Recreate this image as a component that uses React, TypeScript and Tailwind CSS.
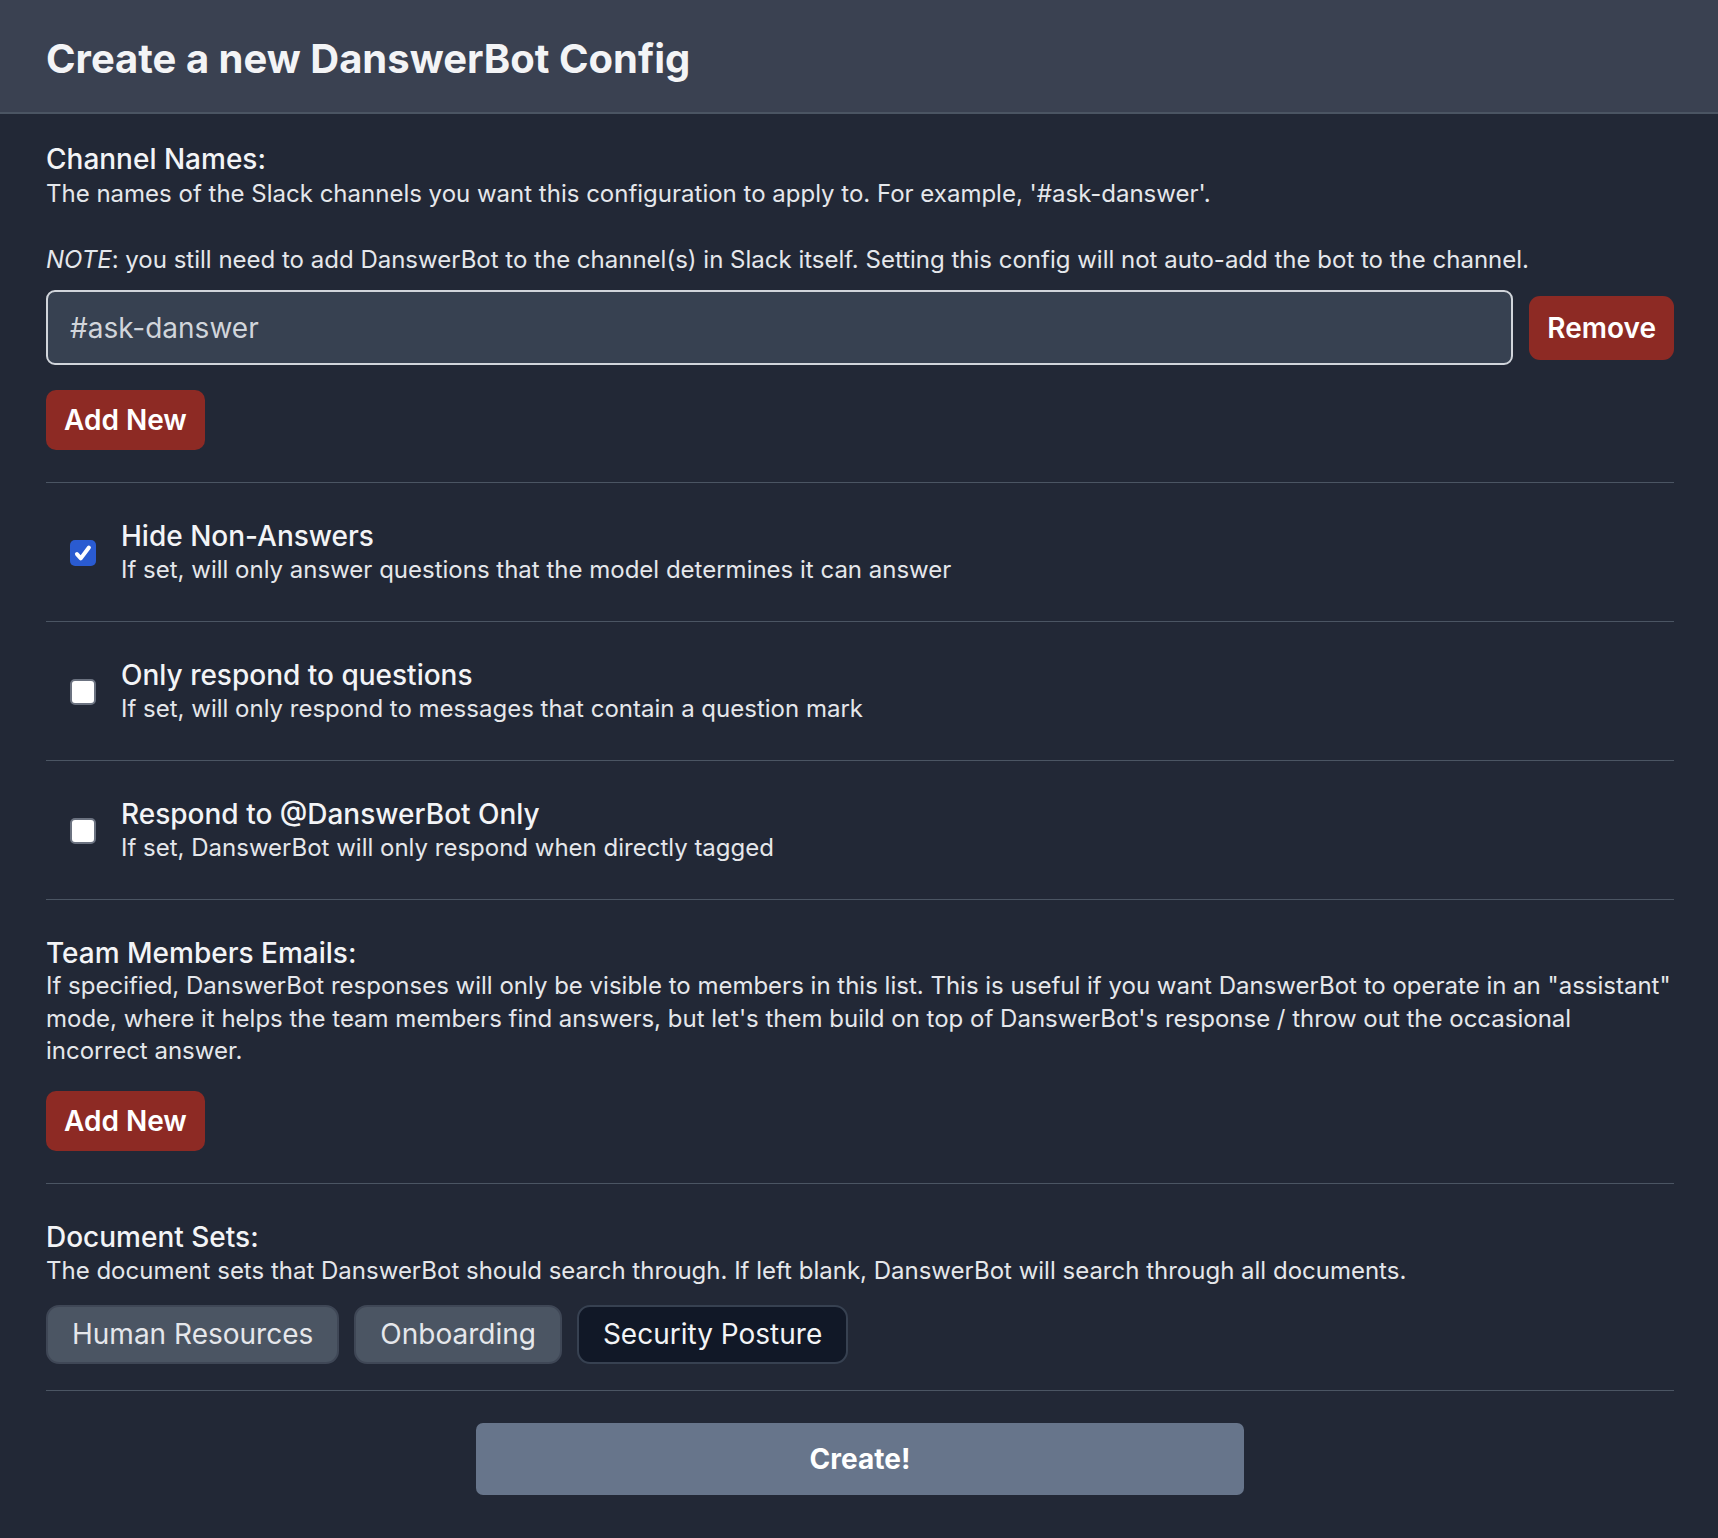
import React from "react";

function Check({ checked }: { checked: boolean }) {
  if (checked) {
    return (
      <div className="w-[26px] h-[26px] rounded-[5px] bg-[#2a5bd1] flex items-center justify-center shrink-0">
        <svg width="22" height="22" viewBox="0 0 16 16" fill="none">
          <path d="M3.6 8.8 L6.4 11.9 L12.3 4.0" stroke="white" strokeWidth="2.9" strokeLinecap="round" strokeLinejoin="round" />
        </svg>
      </div>
    );
  }
  return <div className="w-[26px] h-[26px] rounded-[5px] bg-white border-2 border-[#6b7280] shrink-0" />;
}

function Row({ checked, title, desc }: { checked: boolean; title: string; desc: string }) {
  return (
    <div className="border-t border-[#4b5563] pt-[36px] pb-[35px] pl-[24px] flex items-center gap-[25px]">
      <Check checked={checked} />
      <div>
        <div className="text-[28px] leading-[34px] font-medium text-[#f3f4f6]">{title}</div>
        <div className="text-[24px] leading-[33px] text-[#e5e7eb]">{desc}</div>
      </div>
    </div>
  );
}

function RedButton({ children }: { children: React.ReactNode }) {
  return (
    <button className="bg-[#8d2a24] text-white text-[28px] font-semibold rounded-[10px] px-[18px] h-[60px] leading-[60px]">
      {children}
    </button>
  );
}

export default function App() {
  return (
    <div
      className="min-h-[1538px] bg-[#222836] text-[#e5e7eb]"
      style={{ fontFamily: "Inter, 'Noto Sans', sans-serif" }}
    >
      <div className="h-[114px] bg-[#3a4151] border-b-2 border-[#4b5563] flex items-center px-[46px]">
        <h1 className="text-[40px] font-bold text-[#f3f4f6] mt-[6px]">Create a new DanswerBot Config</h1>
      </div>

      <div className="pl-[46px] pr-[44px] pt-[28px]">
        <div className="text-[28px] leading-[34px] font-medium text-[#f3f4f6]">Channel Names:</div>
        <div className="text-[24px] leading-[33px] mt-[1px]">
          The names of the Slack channels you want this configuration to apply to. For example, '#ask-danswer'.
          <br />
          <br />
          <i>NOTE</i>: you still need to add DanswerBot to the channel(s) in Slack itself. Setting this config will not auto-add the bot to the channel.
        </div>

        <div className="mt-[14px] flex items-center gap-[16px]">
          <div className="flex-1 h-[75px] rounded-[9px] border-2 border-[#d1d5db] bg-[#374151] flex items-center px-[22px] text-[28px] text-[#d1d5db]">
            #ask-danswer
          </div>
          <button className="bg-[#8d2a24] text-white text-[28px] font-semibold rounded-[11px] px-[18px] h-[64px]">Remove</button>
        </div>

        <div className="mt-[25px]">
          <RedButton>Add New</RedButton>
        </div>

        <div className="mt-[32px]">
          <Row checked={true} title="Hide Non-Answers" desc="If set, will only answer questions that the model determines it can answer" />
          <Row checked={false} title="Only respond to questions" desc="If set, will only respond to messages that contain a question mark" />
          <Row checked={false} title="Respond to @DanswerBot Only" desc="If set, DanswerBot will only respond when directly tagged" />
        </div>

        <div className="border-t border-[#4b5563] pt-[36px]">
          <div className="text-[28px] leading-[34px] font-medium text-[#f3f4f6]">Team Members Emails:</div>
          <div className="text-[24px] leading-[32.5px]">
            If specified, DanswerBot responses will only be visible to members in this list. This is useful if you want DanswerBot to operate in an "assistant" mode, where it helps the team members find answers, but let's them build on top of DanswerBot's response / throw out the occasional incorrect answer.
          </div>
          <div className="mt-[23px]">
            <RedButton>Add New</RedButton>
          </div>
        </div>

        <div className="mt-[32px] border-t border-[#4b5563] pt-[36px]">
          <div className="text-[28px] leading-[34px] font-medium text-[#f3f4f6]">Document Sets:</div>
          <div className="text-[24px] leading-[33px]">
            The document sets that DanswerBot should search through. If left blank, DanswerBot will search through all documents.
          </div>
          <div className="mt-[18px] flex gap-[15px]">
            <div className="h-[59px] px-[24px] flex items-center rounded-[13px] bg-[#4b5563] border-2 border-[#3f4756] text-[28px] text-[#e5e7eb]">Human Resources</div>
            <div className="h-[59px] px-[24px] flex items-center rounded-[13px] bg-[#4b5563] border-2 border-[#3f4756] text-[28px] text-[#e5e7eb]">Onboarding</div>
            <div className="h-[59px] px-[24px] flex items-center rounded-[13px] bg-[#111827] border-2 border-[#374151] text-[28px] text-[#f3f4f6]">Security Posture</div>
          </div>
        </div>

        <div className="mt-[26px] border-t border-[#4b5563] pt-[32px] flex justify-center">
          <button className="w-[768px] h-[72px] rounded-[7px] bg-[#67758b] text-white text-[28px] font-bold">Create!</button>
        </div>
      </div>
    </div>
  );
}
